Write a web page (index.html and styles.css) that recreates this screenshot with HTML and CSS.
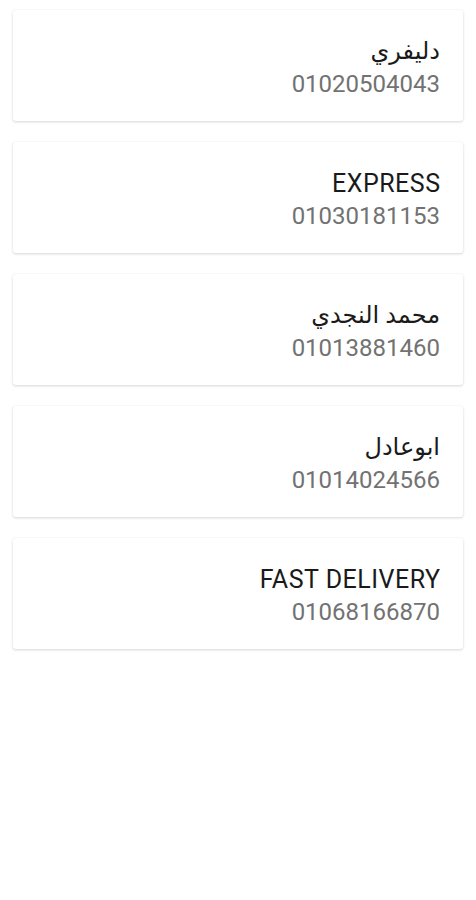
FILE: index.html
```html
<!DOCTYPE html>
<html lang="ar">
<head>
<meta charset="utf-8">
<title>Delivery contacts</title>
<link rel="stylesheet" href="styles.css">
</head>
<body>
<main class="list">
  <div class="card">
    <div class="name" dir="rtl">دليفري</div>
    <div class="phone">01020504043</div>
  </div>
  <div class="card">
    <div class="name latin">EXPRESS</div>
    <div class="phone">01030181153</div>
  </div>
  <div class="card">
    <div class="name" dir="rtl">محمد النجدي</div>
    <div class="phone">01013881460</div>
  </div>
  <div class="card">
    <div class="name" dir="rtl">ابوعادل</div>
    <div class="phone">01014024566</div>
  </div>
  <div class="card">
    <div class="name latin">FAST DELIVERY</div>
    <div class="phone">01068166870</div>
  </div>
</main>
</body>
</html>
```
FILE: styles.css
```css
html, body {
  margin: 0;
  background: #ffffff;
}
body {
  font-family: Roboto, "DejaVu Sans", sans-serif;
}
.list {
  display: flex;
  flex-direction: column;
  gap: 21px;
  padding: 10px 13px;
}
.card {
  background: #fff;
  border-radius: 3px;
  box-shadow: 0 1px 3px rgba(0, 0, 0, 0.16), 0 0 1px rgba(0, 0, 0, 0.08);
  padding: 25px 23px 20px 22px;
  text-align: right;
}
.name, .phone {
  font-size: 24px;
  line-height: 33px;
  height: 33px;
}
.name {
  color: #1a1a1a;
  text-align: right;
}
.name.latin {
  font-size: 25px;
  letter-spacing: 0.5px;
  margin-right: -0.5px;
}
.phone {
  color: #727272;
}
```
